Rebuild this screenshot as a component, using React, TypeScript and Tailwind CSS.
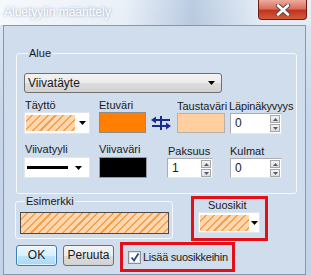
import React from "react";

const hatch =
  "bg-[repeating-linear-gradient(135deg,#ffd6ad_0px,#ffd6ad_4px,#f5a04d_4px,#f5a04d_5.5px)]";
const greyBtn =
  "bg-[linear-gradient(#f3f3f3,#ebebeb_50%,#dddddd_50%,#d2d2d2)] border border-[#707070] rounded-[3px]";

function Arrow() {
  return (
    <svg width="7" height="4" viewBox="0 0 7 4" className="shrink-0">
      <path d="M0 0h7L3.5 4z" fill="#000" />
    </svg>
  );
}

function SpinArrow({ up }: { up?: boolean }) {
  return (
    <svg width="5" height="3" viewBox="0 0 5 3">
      <path d={up ? "M0 3h5L2.5 0z" : "M0 0h5L2.5 3z"} fill="#4a5a78" />
    </svg>
  );
}

function Spinner({ value, className }: { value: string; className: string }) {
  return (
    <div className={`flex bg-white border border-[#abadb3] border-b-[#e3e9ef] border-r-[#dbdfe6] ${className}`}>
      <span className="flex-1 pl-[4px] self-center text-[12px]">{value}</span>
      <div className="flex flex-col gap-[1px] pt-[1px] pr-[1px]">
        <div className="w-[10px] h-[8px] flex items-center justify-center border border-[#a6a6a6] bg-[linear-gradient(#f4f4f4,#dedede)]">
          <SpinArrow up />
        </div>
        <div className="w-[10px] h-[8px] flex items-center justify-center border border-[#a6a6a6] bg-[linear-gradient(#f4f4f4,#dedede)]">
          <SpinArrow />
        </div>
      </div>
    </div>
  );
}

function SwapIcon() {
  return (
    <svg width="20" height="16" viewBox="0 0 20 16">
      <g fill="#1b2a8e" stroke="#1b2a8e">
        <line x1="3" y1="5" x2="19" y2="5" strokeWidth="2" />
        <path d="M0 5L5 1.5V8.5z" stroke="none" />
        <line x1="1" y1="11" x2="17" y2="11" strokeWidth="2" />
        <path d="M20 11L15 7.5V14.5z" stroke="none" />
        <line x1="10" y1="1" x2="10" y2="15" strokeWidth="2" />
      </g>
    </svg>
  );
}

function PatternPicker({ className }: { className: string }) {
  return (
    <div className={`flex items-center bg-white border border-[#e2e6ea] ${className}`}>
      <div className={`ml-[1px] h-[16px] w-[49px] ${hatch}`} />
      <div className="flex-1 flex justify-center">
        <Arrow />
      </div>
    </div>
  );
}

export default function App() {
  return (
    <div className="w-[311px] h-[276px] flex flex-col overflow-hidden bg-[linear-gradient(180deg,#dfe9f5,#c8d7ea_40%,#c3d3e8)] font-['Liberation_Sans',Arial,sans-serif] text-[11px] leading-[13px] text-[#1a1a1a]">
      {/* title bar */}
      <div className="h-[25px] shrink-0 flex items-start justify-between bg-[linear-gradient(90deg,rgba(255,255,255,0.75)_0%,rgba(255,255,255,0.35)_40%,rgba(120,150,190,0.35)_62%,rgba(255,255,255,0.25)_85%)]">
        <span className="ml-[4px] mt-[5px] text-[12px] leading-[14px] text-white [text-shadow:0_0_3px_rgba(80,110,150,0.7)]">
          Aluetyylin määrittely
        </span>
        <div className="mr-[4px] w-[49px] h-[20px] flex items-center justify-center rounded-b-[4px] border border-t-0 border-[#6e1c14] bg-[linear-gradient(#eeaa9e,#d9705e_45%,#c2341f_55%,#d45a3d)]">
          <svg width="16" height="12" viewBox="0 0 16 12">
            <path d="M3 1.5L13 10.5M13 1.5L3 10.5" stroke="#5a4a48" strokeWidth="4.5" strokeLinecap="round" />
            <path d="M3 1.5L13 10.5M13 1.5L3 10.5" stroke="#fff" strokeWidth="2.6" strokeLinecap="round" />
          </svg>
        </div>
      </div>

      {/* client area */}
      <div className="ml-[3px] mr-[5px] h-[250px] shrink-0 border border-[#8597b1] bg-[#d0ddec] flex flex-col">
        {/* Alue */}
        <fieldset className="ml-[12px] mt-[21px] w-[281px] h-[147px] border border-[#f6f9fc] rounded-[3px] pl-[7px]">
          <legend className="ml-[4px] px-[1px]">Alue</legend>
          <div className={`mt-[13px] w-[198px] h-[20px] flex items-center justify-between pl-[3px] pr-[6px] ${greyBtn}`}>
            <span className="text-[12px]">Viivatäyte</span>
            <Arrow />
          </div>

          <div className="mt-[6px] flex items-start">
            <div className="w-[66px] flex flex-col">
              <span className="pl-[1px]">Täyttö</span>
              <PatternPicker className="h-[22px]" />
            </div>
            <div className="ml-[9px] w-[47px] flex flex-col">
              <span>Etuväri</span>
              <div className="h-[21px] bg-[#ff8000] border border-[#8c8c8c]" />
            </div>
            <div className="ml-[5px] w-[20px] flex flex-col">
              <span>&nbsp;</span>
              <div className="h-[21px] flex items-center justify-center">
                <SwapIcon />
              </div>
            </div>
            <div className="ml-[6px] w-[48px] flex flex-col pt-[1px]">
              <span>Taustaväri</span>
              <div className="h-[20px] bg-[#ffcf9f] border border-[#b9b0a8]" />
            </div>
            <div className="ml-[5px] w-[52px] flex flex-col pt-[1px]">
              <span className="-ml-[1px] whitespace-nowrap tracking-[-0.15px]">Läpinäkyvyys</span>
              <Spinner value="0" className="h-[21px]" />
            </div>
          </div>

          <div className="mt-[9px] flex items-end">
            <div className="w-[66px] flex flex-col">
              <span className="pl-[1px]">Viivatyyli</span>
              <div className="mt-[1px] h-[21px] flex items-center bg-white border border-[#e2e6ea]">
                <div className="ml-[2px] w-[41px] h-[3px] bg-black" />
                <div className="flex-1 flex justify-center">
                  <Arrow />
                </div>
              </div>
            </div>
            <div className="ml-[9px] w-[48px] flex flex-col">
              <span>Viivaväri</span>
              <div className="mt-[1px] h-[21px] bg-black border border-[#9a9a9a]" />
            </div>
            <div className="ml-[20px] w-[46px] flex flex-col">
              <span className="pl-[1px]">Paksuus</span>
              <Spinner value="1" className="h-[20px]" />
            </div>
            <div className="ml-[17px] w-[52px] flex flex-col">
              <span>Kulmat</span>
              <Spinner value="0" className="h-[20px]" />
            </div>
          </div>
        </fieldset>

        {/* Esimerkki + Suosikit */}
        <div className="flex items-start">
          <fieldset className="ml-[11px] mt-[1px] w-[158px] h-[44px] border border-[#f6f9fc] rounded-[3px] pl-[4px] pr-[3px]">
            <legend className="ml-[5px] px-[1px]">Esimerkki</legend>
            <div className={`mt-[4px] h-[22px] border border-[#4a4a4a] ${hatch}`} />
          </fieldset>
          <div className="ml-[18px] mt-[2px] w-[77px] h-[45px] border-[3px] border-[#e3101a] flex flex-col">
            <span className="pl-[14px]">Suosikit</span>
            <PatternPicker className="ml-[4px] w-[62px] h-[21px]" />
          </div>
        </div>

        {/* buttons */}
        <div className="mt-[1px] flex items-start">
          <button className="ml-[12px] mt-[3px] w-[41px] h-[21px] flex items-center justify-center text-[12px] rounded-[3px] border border-[#3c7fb1] bg-[linear-gradient(#eaf6fd,#d9f0fc_50%,#bee6fd_50%,#a7d9f5)] shadow-[inset_0_0_0_1px_rgba(255,255,255,0.6)]">
            OK
          </button>
          <button className={`ml-[6px] mt-[3px] w-[51px] h-[21px] flex items-center justify-center text-[12px] ${greyBtn}`}>
            Peruuta
          </button>
          <div className="ml-[6px] w-[115px] h-[30px] border-[3px] border-[#e3101a] flex items-center pl-[5px] gap-[2px]">
            <div className="w-[13px] h-[13px] shrink-0 bg-white border border-[#8e8f8f] flex items-center justify-center shadow-[inset_0_0_0_1px_#dfe4ea]">
              <svg width="10" height="10" viewBox="0 0 10 10">
                <path d="M1.5 5.5L4 8.5L8.5 1.5" fill="none" stroke="#2a4a85" strokeWidth="1.8" />
              </svg>
            </div>
            <span className="text-[11px] whitespace-nowrap tracking-[-0.25px]">Lisää suosikkeihin</span>
          </div>
        </div>
      </div>
    </div>
  );
}
